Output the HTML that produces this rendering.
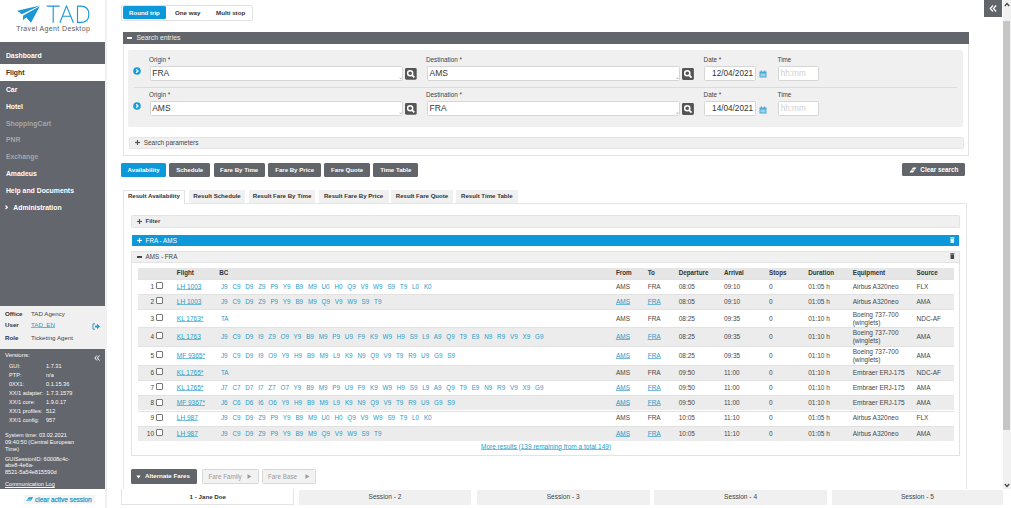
<!DOCTYPE html>
<html><head><meta charset="utf-8">
<style>
*{box-sizing:border-box;margin:0;padding:0}
html,body{width:1011px;height:508px;overflow:hidden;background:#fff}
body{position:relative;font-family:"Liberation Sans",sans-serif;color:#333}
.a{position:absolute}
.t{position:absolute;white-space:nowrap;line-height:1}
.b{font-weight:bold}
.u{text-decoration:underline;text-decoration-thickness:0.6px;text-underline-offset:0.4px}
</style></head>
<body>
<svg class="a" style="left:0;top:0" width="105" height="42" viewBox="0 0 105 42">
<path d="M17.3 10.7 L40 5.5 L21.8 14.3 Z" fill="#1a98d5"/>
<path d="M23.2 15.6 L39.8 6.2 L31 22.8 L26.2 17.6 L22.8 20.2 Z" fill="#1a98d5"/>
<g fill="none" stroke="#1a98d5" stroke-width="1.15" stroke-linejoin="round">
<path d="M46.8 6.1 H59.7 M53.2 6.1 V22.8"/>
<path d="M59.9 22.8 L66.5 5.9 L73.4 22.8 M62.2 16.2 H70.8"/>
<path d="M77.5 22.4 V6.1 H80.5 Q88.9 6.1 88.9 14.2 Q88.9 22.4 80.5 22.4 Z"/>
</g></svg>
<div class="t" style="left:16.3px;top:24.6px;font-size:7px;color:#5c5c5c;letter-spacing:0.36px">Travel Agent Desktop</div>
<div class="a" style="left:105px;top:0;width:1.8px;height:508px;background:#f0f0f0"></div>
<div class="a" style="left:0;top:42px;width:105px;height:264px;background:#63666c"></div>
<div class="a" style="left:0;top:63.5px;width:105px;height:17px;background:#fff"></div>
<div class="t" style="left:5.90px;top:53.10px;font-size:6.85px;font-weight:bold;color:#fff">Dashboard</div>
<div class="t" style="left:5.90px;top:70.15px;font-size:6.85px;font-weight:bold;color:#333">Flight</div>
<div class="t" style="left:5.90px;top:87.15px;font-size:6.85px;font-weight:bold;color:#fff">Car</div>
<div class="t" style="left:5.90px;top:104.05px;font-size:6.85px;font-weight:bold;color:#fff">Hotel</div>
<div class="t" style="left:5.90px;top:120.75px;font-size:6.85px;font-weight:bold;color:#a4a6a9">ShoppingCart</div>
<div class="t" style="left:5.90px;top:137.25px;font-size:6.85px;font-weight:bold;color:#a4a6a9">PNR</div>
<div class="t" style="left:5.90px;top:154.45px;font-size:6.85px;font-weight:bold;color:#a4a6a9">Exchange</div>
<div class="t" style="left:5.90px;top:171.45px;font-size:6.85px;font-weight:bold;color:#fff">Amadeus</div>
<div class="t" style="left:5.90px;top:188.45px;font-size:6.85px;font-weight:bold;color:#fff">Help and Documents</div>
<svg class="a" style="left:5.2px;top:205.4px" width="3" height="4.5" viewBox="0 0 3 4.5"><path d="M0.5 0.5 L2.4 2.25 L0.5 4" fill="none" stroke="#fff" stroke-width="1.1"/></svg>
<div class="t" style="left:13.30px;top:205.05px;font-size:6.85px;font-weight:bold;color:#fff">Administration</div>
<div class="a" style="left:0;top:306px;width:105px;height:42.5px;background:#f0f0f0"></div>
<div class="t" style="left:5.00px;top:311.09px;font-size:6.2px;font-weight:bold;color:#333">Office</div>
<div class="t" style="left:31.00px;top:310.66px;font-size:6.2px;color:#444">TAD Agency</div>
<div class="t" style="left:5.00px;top:322.09px;font-size:6.2px;font-weight:bold;color:#333">User</div>
<div class="t" style="left:31.00px;top:321.66px;font-size:6.2px;color:#2a9cc9;text-decoration:underline;text-decoration-color:rgba(42,156,201,0.65);text-underline-offset:0.3px">TAD_EN</div>
<div class="t" style="left:5.00px;top:335.09px;font-size:6.2px;font-weight:bold;color:#333">Role</div>
<div class="t" style="left:31.00px;top:334.66px;font-size:6.2px;color:#444">Ticketing Agent</div>
<svg class="a" style="left:92px;top:322.5px" width="8" height="7" viewBox="0 0 8 7"><path d="M3 0.8 H1 V6.2 H3" fill="none" stroke="#2a9cc9" stroke-width="1"/><path d="M3 2.5 H5 V0.8 L8 3.5 L5 6.2 V4.5 H3 Z" fill="#2a9cc9"/></svg>
<div class="a" style="left:0;top:348.5px;width:105px;height:140px;background:#63666c"></div>
<div class="t" style="left:5.00px;top:352.04px;font-size:6px;color:#fafafa">Versions:</div>
<svg class="a" style="left:94px;top:355px" width="6" height="6" viewBox="0 0 6 6"><path d="M3 0.5 L0.8 3 L3 5.5 M5.5 0.5 L3.3 3 L5.5 5.5" fill="none" stroke="#fff" stroke-width="1"/></svg>
<div class="t" style="left:9.00px;top:364.44px;font-size:5.6px;color:#fafafa">GUI:</div>
<div class="t" style="left:46.00px;top:364.44px;font-size:5.6px;color:#fafafa">1.7.31</div>
<div class="t" style="left:9.00px;top:373.44px;font-size:5.6px;color:#fafafa">PTP:</div>
<div class="t" style="left:46.00px;top:373.44px;font-size:5.6px;color:#fafafa">n/a</div>
<div class="t" style="left:9.00px;top:382.24px;font-size:5.6px;color:#fafafa">0XX1:</div>
<div class="t" style="left:46.00px;top:382.24px;font-size:5.6px;color:#fafafa">0.1.15.36</div>
<div class="t" style="left:9.00px;top:391.44px;font-size:5.6px;color:#fafafa">XX/1 adapter:</div>
<div class="t" style="left:46.00px;top:391.44px;font-size:5.6px;color:#fafafa">1.7.3.1579</div>
<div class="t" style="left:9.00px;top:400.44px;font-size:5.6px;color:#fafafa">XX/1 core:</div>
<div class="t" style="left:46.00px;top:400.44px;font-size:5.6px;color:#fafafa">1.9.0.17</div>
<div class="t" style="left:9.00px;top:409.14px;font-size:5.6px;color:#fafafa">XX/1 profiles:</div>
<div class="t" style="left:46.00px;top:409.14px;font-size:5.6px;color:#fafafa">512</div>
<div class="t" style="left:9.00px;top:417.94px;font-size:5.6px;color:#fafafa">XX/1 config:</div>
<div class="t" style="left:46.00px;top:417.94px;font-size:5.6px;color:#fafafa">957</div>
<div class="t" style="left:5.00px;top:433.44px;font-size:5.6px;color:#fafafa">System time: 03.02.2021</div>
<div class="t" style="left:5.00px;top:440.24px;font-size:5.6px;color:#fafafa">09:40:50 (Central European</div>
<div class="t" style="left:5.00px;top:447.14px;font-size:5.6px;color:#fafafa">Time)</div>
<div class="t" style="left:5.00px;top:456.94px;font-size:5.6px;color:#fafafa">GUISessionID: 60008c4c-</div>
<div class="t" style="left:5.00px;top:463.44px;font-size:5.6px;color:#fafafa">abe8-4e6a-</div>
<div class="t" style="left:5.00px;top:470.44px;font-size:5.6px;color:#fafafa">8521-5a54e815590d</div>
<div class="t" style="left:5.00px;top:481.94px;font-size:5.6px;color:#fafafa;text-decoration:underline">Communication Log</div>
<div class="a" style="left:24px;top:494.5px;width:71px;height:9.5px;background:#f4f4f4"></div>
<svg class="a" style="left:25.8px;top:496.8px" width="7.5" height="4.2" viewBox="0 0 7.5 4.2"><path d="M0.2 4 L2.8 0.2 H7.2 L4.6 4 Z" fill="#2a9cc9"/><path d="M0.2 4 L1.5 2.1 H5.9 L4.6 4 Z" fill="#7cc3e3"/></svg>
<div class="t" style="left:35.00px;top:497.05px;font-size:6.5px;color:#2a9cc9;-webkit-text-stroke:0.25px #2a9cc9">clear active session</div>
<div class="a" style="left:984px;top:0;width:18px;height:17px;background:#626569"></div>
<svg class="a" style="left:989px;top:5px" width="8" height="7" viewBox="0 0 8 7"><path d="M4 0.5 L1.2 3.5 L4 6.5 M7.2 0.5 L4.4 3.5 L7.2 6.5" fill="none" stroke="#fff" stroke-width="1.2"/></svg>
<div class="a" style="left:1003px;top:0;width:8px;height:489px;background:#f1f1f1"></div>
<div class="a" style="left:1003.2px;top:21.3px;width:6.5px;height:408.7px;background:#c6c6c6"></div>
<svg class="a" style="left:1004px;top:2px" width="6" height="5" viewBox="0 0 6 5"><path d="M0.8 4 L3 1.5 L5.2 4" fill="none" stroke="#444" stroke-width="1.2"/></svg>
<svg class="a" style="left:1004px;top:483px" width="6" height="5" viewBox="0 0 6 5"><path d="M0.8 1 L3 3.5 L5.2 1" fill="none" stroke="#444" stroke-width="1.2"/></svg>
<div class="a" style="left:121px;top:4.7px;width:132px;height:16px;border:1px solid #e2e2e2;border-radius:2px;background:#fff"></div>
<div class="a" style="left:122.7px;top:6.2px;width:43.5px;height:13.1px;background:#0d98da;border-radius:1.5px"></div>
<div class="t" style="left:122.70px;top:9.79px;font-size:6.1px;width:43.50px;text-align:center;font-weight:bold;color:#fff">Round trip</div>
<div class="t" style="left:175.00px;top:9.79px;font-size:6.2px;font-weight:bold;color:#333">One way</div>
<div class="t" style="left:216.00px;top:9.79px;font-size:6.2px;font-weight:bold;color:#333">Multi stop</div>
<div class="a" style="left:122.5px;top:32px;width:846px;height:123.5px;border:1px solid #e3e3e3;border-top:none;background:#fff"></div>
<div class="a" style="left:122.5px;top:32px;width:846px;height:11.8px;background:#626569"></div>
<div class="a" style="left:127.2px;top:37.3px;width:5px;height:1.5px;background:#fff"></div>
<div class="t" style="left:136.50px;top:34.85px;font-size:6.8px;color:#f0f0f0">Search entries</div>
<div class="a" style="left:128.3px;top:50.3px;width:834.7px;height:76.7px;background:#f0f0f0;border-radius:2px"></div>
<div class="a" style="left:134px;top:87px;width:823px;height:1px;background:#dcdcdc"></div>
<svg class="a" style="left:133.3px;top:66.6px" width="8" height="8" viewBox="0 0 8 8"><circle cx="4" cy="4" r="3.8" fill="#1a9ad6"/><path d="M3.2 2.2 L5 4 L3.2 5.8" fill="none" stroke="#fff" stroke-width="1.3"/></svg>
<div class="t" style="left:149.00px;top:57.15px;font-size:6.35px;color:#444">Origin *</div>
<div class="a" style="left:149.5px;top:65.5px;width:253.3px;height:15px;background:#fff;border:1px solid #d6d6d6;border-radius:1.5px"></div>
<div class="t" style="left:152.20px;top:68.88px;font-size:8.5px;color:#333">FRA</div>
<div class="t" style="left:397.5px;top:73.7px;font-size:6px;color:#999">&#8964;</div>
<svg class="a" style="left:404.9px;top:67.8px" width="11.7" height="11.9" viewBox="0 0 12 12"><rect width="12" height="12" rx="1.5" fill="#555"/><circle cx="5.3" cy="5.3" r="2.6" fill="none" stroke="#fff" stroke-width="1.5"/><path d="M7.2 7.2 L9.6 9.6" stroke="#fff" stroke-width="1.8"/></svg>
<div class="t" style="left:426.00px;top:57.15px;font-size:6.35px;color:#444">Destination *</div>
<div class="a" style="left:426.5px;top:65.5px;width:253.4px;height:15px;background:#fff;border:1px solid #d6d6d6;border-radius:1.5px"></div>
<div class="t" style="left:429.60px;top:68.88px;font-size:8.5px;color:#333">AMS</div>
<div class="t" style="left:674.5px;top:73.7px;font-size:6px;color:#999">&#8964;</div>
<svg class="a" style="left:682.3px;top:67.8px" width="11.9" height="11.9" viewBox="0 0 12 12"><rect width="12" height="12" rx="1.5" fill="#555"/><circle cx="5.3" cy="5.3" r="2.6" fill="none" stroke="#fff" stroke-width="1.5"/><path d="M7.2 7.2 L9.6 9.6" stroke="#fff" stroke-width="1.8"/></svg>
<div class="t" style="left:703.60px;top:57.15px;font-size:6.35px;color:#444">Date *</div>
<div class="a" style="left:703.6px;top:65.5px;width:52.5px;height:15px;background:#fff;border:1px solid #d6d6d6;border-radius:1.5px"></div>
<div class="t" style="left:703.60px;top:70.38px;font-size:8.2px;width:49.50px;text-align:right;color:#333">12/04/2021</div>
<svg class="a" style="left:758.8px;top:70.1px" width="8" height="8" viewBox="0 0 8 8"><rect x="0.5" y="1.5" width="7" height="6" fill="#4aa8d8"/><rect x="1.5" y="3.5" width="5" height="3" fill="#9fd0ea"/><rect x="1.8" y="0.3" width="1" height="2" fill="#4aa8d8"/><rect x="5.2" y="0.3" width="1" height="2" fill="#4aa8d8"/></svg>
<div class="t" style="left:777.50px;top:57.15px;font-size:6.35px;color:#444">Time</div>
<div class="a" style="left:777.5px;top:65.5px;width:41.8px;height:15px;background:#fff;border:1px solid #d6d6d6;border-radius:1.5px"></div>
<div class="t" style="left:780.70px;top:70.18px;font-size:8.2px;color:#d0d0d0">hh:mm</div>
<svg class="a" style="left:133.3px;top:102.0px" width="8" height="8" viewBox="0 0 8 8"><circle cx="4" cy="4" r="3.8" fill="#1a9ad6"/><path d="M3.2 2.2 L5 4 L3.2 5.8" fill="none" stroke="#fff" stroke-width="1.3"/></svg>
<div class="t" style="left:149.00px;top:92.45px;font-size:6.35px;color:#444">Origin *</div>
<div class="a" style="left:149.5px;top:100.9px;width:253.3px;height:15px;background:#fff;border:1px solid #d6d6d6;border-radius:1.5px"></div>
<div class="t" style="left:152.20px;top:103.83px;font-size:8.5px;color:#333">AMS</div>
<div class="t" style="left:397.5px;top:109.1px;font-size:6px;color:#999">&#8964;</div>
<svg class="a" style="left:404.9px;top:103.2px" width="11.7" height="11.9" viewBox="0 0 12 12"><rect width="12" height="12" rx="1.5" fill="#555"/><circle cx="5.3" cy="5.3" r="2.6" fill="none" stroke="#fff" stroke-width="1.5"/><path d="M7.2 7.2 L9.6 9.6" stroke="#fff" stroke-width="1.8"/></svg>
<div class="t" style="left:426.00px;top:92.45px;font-size:6.35px;color:#444">Destination *</div>
<div class="a" style="left:426.5px;top:100.9px;width:253.4px;height:15px;background:#fff;border:1px solid #d6d6d6;border-radius:1.5px"></div>
<div class="t" style="left:429.60px;top:103.83px;font-size:8.5px;color:#333">FRA</div>
<div class="t" style="left:674.5px;top:109.1px;font-size:6px;color:#999">&#8964;</div>
<svg class="a" style="left:682.3px;top:103.2px" width="11.9" height="11.9" viewBox="0 0 12 12"><rect width="12" height="12" rx="1.5" fill="#555"/><circle cx="5.3" cy="5.3" r="2.6" fill="none" stroke="#fff" stroke-width="1.5"/><path d="M7.2 7.2 L9.6 9.6" stroke="#fff" stroke-width="1.8"/></svg>
<div class="t" style="left:703.60px;top:92.45px;font-size:6.35px;color:#444">Date *</div>
<div class="a" style="left:703.6px;top:100.9px;width:52.5px;height:15px;background:#fff;border:1px solid #d6d6d6;border-radius:1.5px"></div>
<div class="t" style="left:703.60px;top:105.33px;font-size:8.2px;width:49.50px;text-align:right;color:#333">14/04/2021</div>
<svg class="a" style="left:758.8px;top:105.5px" width="8" height="8" viewBox="0 0 8 8"><rect x="0.5" y="1.5" width="7" height="6" fill="#4aa8d8"/><rect x="1.5" y="3.5" width="5" height="3" fill="#9fd0ea"/><rect x="1.8" y="0.3" width="1" height="2" fill="#4aa8d8"/><rect x="5.2" y="0.3" width="1" height="2" fill="#4aa8d8"/></svg>
<div class="t" style="left:777.50px;top:92.45px;font-size:6.35px;color:#444">Time</div>
<div class="a" style="left:777.5px;top:100.9px;width:41.8px;height:15px;background:#fff;border:1px solid #d6d6d6;border-radius:1.5px"></div>
<div class="t" style="left:780.70px;top:105.13px;font-size:8.2px;color:#d0d0d0">hh:mm</div>
<div class="a" style="left:129px;top:136.8px;width:835px;height:12.4px;background:#f0f0f0;border:1px solid #e6e6e6;border-radius:1.5px"></div>
<svg class="a" style="left:135px;top:140px" width="5" height="5" viewBox="0 0 5 5"><rect x="1.9" y="0" width="1.2" height="5" fill="#555"/><rect x="0" y="1.9" width="5" height="1.2" fill="#555"/></svg>
<div class="t" style="left:143.70px;top:140.35px;font-size:6.45px;color:#444">Search parameters</div>
<div class="a" style="left:121.2px;top:163px;width:44.80px;height:13.90px;background:#0d98da;border-radius:1.5px"></div>
<div class="t" style="left:121.20px;top:166.84px;font-size:6.1px;width:44.80px;text-align:center;font-weight:bold;color:#fff">Availability</div>
<div class="a" style="left:169.2px;top:163px;width:41.00px;height:13.90px;background:#626569;border-radius:1.5px"></div>
<div class="t" style="left:169.20px;top:166.84px;font-size:6.1px;width:41.00px;text-align:center;font-weight:bold;color:#fff">Schedule</div>
<div class="a" style="left:213.6px;top:163px;width:51.20px;height:13.90px;background:#626569;border-radius:1.5px"></div>
<div class="t" style="left:213.60px;top:166.84px;font-size:6.1px;width:51.20px;text-align:center;font-weight:bold;color:#fff">Fare By Time</div>
<div class="a" style="left:268.4px;top:163px;width:52.50px;height:13.90px;background:#626569;border-radius:1.5px"></div>
<div class="t" style="left:268.40px;top:166.84px;font-size:6.1px;width:52.50px;text-align:center;font-weight:bold;color:#fff">Fare By Price</div>
<div class="a" style="left:324.2px;top:163px;width:45.90px;height:13.90px;background:#626569;border-radius:1.5px"></div>
<div class="t" style="left:324.20px;top:166.84px;font-size:6.1px;width:45.90px;text-align:center;font-weight:bold;color:#fff">Fare Quote</div>
<div class="a" style="left:373.2px;top:163px;width:45.20px;height:13.90px;background:#626569;border-radius:1.5px"></div>
<div class="t" style="left:373.20px;top:166.84px;font-size:6.1px;width:45.20px;text-align:center;font-weight:bold;color:#fff">Time Table</div>
<div class="a" style="left:902px;top:163.2px;width:62.80px;height:13.30px;background:#626569;border-radius:1.5px"></div>
<div class="t" style="left:914.00px;top:167.30px;font-size:6.35px;width:50.80px;text-align:center;font-weight:bold;color:#fff">Clear search</div>
<svg class="a" style="left:908.5px;top:167px" width="8" height="6" viewBox="0 0 8 6"><path d="M0.5 5.5 L4 0.5 H7.5 L4 5.5 Z" fill="#fff"/><path d="M2.3 3 H5.8" stroke="#626569" stroke-width="0.8"/></svg>
<div class="a" style="left:122.5px;top:202.5px;width:844px;height:287px;border:1px solid #e6e6e6;background:#fff"></div>
<div class="a" style="left:122.5px;top:189.5px;width:62.8px;height:14px;background:#fff;border:1px solid #e3e3e3;border-bottom:none"></div>
<div class="t" style="left:122.50px;top:193.39px;font-size:6.1px;width:62.80px;text-align:center;font-weight:bold;color:#333">Result Availability</div>
<div class="a" style="left:188.6px;top:190px;width:56.9px;height:12.5px;background:#f0f0f0"></div>
<div class="t" style="left:188.60px;top:193.39px;font-size:6.1px;width:56.90px;text-align:center;font-weight:bold;color:#333">Result Schedule</div>
<div class="a" style="left:248.6px;top:190px;width:66.9px;height:12.5px;background:#f0f0f0"></div>
<div class="t" style="left:248.60px;top:193.39px;font-size:6.1px;width:66.90px;text-align:center;font-weight:bold;color:#333">Result Fare By Time</div>
<div class="a" style="left:318.5px;top:190px;width:70.1px;height:12.5px;background:#f0f0f0"></div>
<div class="t" style="left:318.50px;top:193.39px;font-size:6.1px;width:70.10px;text-align:center;font-weight:bold;color:#333">Result Fare By Price</div>
<div class="a" style="left:391px;top:190px;width:62.0px;height:12.5px;background:#f0f0f0"></div>
<div class="t" style="left:391.00px;top:193.39px;font-size:6.1px;width:62.00px;text-align:center;font-weight:bold;color:#333">Result Fare Quote</div>
<div class="a" style="left:455.7px;top:190px;width:62.3px;height:12.5px;background:#f0f0f0"></div>
<div class="t" style="left:455.70px;top:193.39px;font-size:6.1px;width:62.30px;text-align:center;font-weight:bold;color:#333">Result Time Table</div>
<div class="a" style="left:131.4px;top:215px;width:828.3px;height:12.5px;background:#f0f0f0;border:1px solid #e3e3e3;border-radius:1.5px"></div>
<svg class="a" style="left:137px;top:219px" width="5" height="5" viewBox="0 0 5 5"><rect x="1.9" y="0" width="1.2" height="5" fill="#555"/><rect x="0" y="1.9" width="5" height="1.2" fill="#555"/></svg>
<div class="t" style="left:145.50px;top:218.19px;font-size:6.05px;font-weight:bold;color:#444">Filter</div>
<div class="a" style="left:131.8px;top:235px;width:827.5px;height:11.2px;background:#0d98da"></div>
<svg class="a" style="left:137px;top:238px" width="5" height="5" viewBox="0 0 5 5"><rect x="1.9" y="0" width="1.2" height="5" fill="#fff"/><rect x="0" y="1.9" width="5" height="1.2" fill="#fff"/></svg>
<div class="t" style="left:145.50px;top:238.05px;font-size:6.35px;color:#fff">FRA - AMS</div>
<svg class="a" style="left:950.4px;top:237.3px" width="4.6" height="6" viewBox="0 0 4.6 6"><rect x="0" y="0.4" width="4.6" height="0.9" fill="#dff0fa"/><rect x="1.5" y="0" width="1.6" height="0.6" fill="#dff0fa"/><rect x="0.5" y="1.6" width="3.6" height="4.4" rx="0.4" fill="#dff0fa"/></svg>
<div class="a" style="left:131.4px;top:250.7px;width:828.3px;height:205.5px;border:1px solid #e3e3e3;background:#fff"></div>
<div class="a" style="left:131.4px;top:250.7px;width:828.3px;height:12.2px;background:#f0f0f0;border:1px solid #e3e3e3"></div>
<div class="a" style="left:136.7px;top:256.3px;width:5px;height:1.3px;background:#444"></div>
<div class="t" style="left:145.50px;top:254.25px;font-size:6.3px;color:#444">AMS - FRA</div>
<svg class="a" style="left:950.4px;top:253.3px" width="4.6" height="6" viewBox="0 0 4.6 6"><rect x="0" y="0.4" width="4.6" height="0.9" fill="#444"/><rect x="1.5" y="0" width="1.6" height="0.6" fill="#444"/><rect x="0.5" y="1.6" width="3.6" height="4.4" rx="0.4" fill="#444"/></svg>
<div class="a" style="left:137.8px;top:267.8px;width:816px;height:10.8px;background:#e6e6e6"></div>
<div class="t" style="left:176.80px;top:270.05px;font-size:6.3px;font-weight:bold;color:#333">Flight</div>
<div class="t" style="left:219.30px;top:270.05px;font-size:6.3px;font-weight:bold;color:#333">BC</div>
<div class="t" style="left:615.90px;top:270.05px;font-size:6.3px;font-weight:bold;color:#333">From</div>
<div class="t" style="left:647.70px;top:270.05px;font-size:6.3px;font-weight:bold;color:#333">To</div>
<div class="t" style="left:678.70px;top:270.05px;font-size:6.3px;font-weight:bold;color:#333">Departure</div>
<div class="t" style="left:723.90px;top:270.05px;font-size:6.3px;font-weight:bold;color:#333">Arrival</div>
<div class="t" style="left:769.00px;top:270.05px;font-size:6.3px;font-weight:bold;color:#333">Stops</div>
<div class="t" style="left:808.20px;top:270.05px;font-size:6.3px;font-weight:bold;color:#333">Duration</div>
<div class="t" style="left:852.70px;top:270.05px;font-size:6.3px;font-weight:bold;color:#333">Equipment</div>
<div class="t" style="left:916.50px;top:270.05px;font-size:6.3px;font-weight:bold;color:#333">Source</div>
<div class="a" style="left:137.8px;top:278.6px;width:816px;height:0.6px;background:#e2e2e2"></div>
<div class="t" style="left:130.00px;top:283.75px;font-size:6.5px;width:24.00px;text-align:right;color:#444">1</div>
<div class="a" style="left:156.2px;top:282.0px;width:7px;height:7px;border:0.7px solid #777;border-radius:1px;background:#fff"></div>
<div class="t" style="left:176.80px;top:283.75px;font-size:6.5px;color:#2a9cc9;text-decoration:underline;text-decoration-color:rgba(42,156,201,0.65);text-underline-offset:0.3px">LH 1003</div>
<div class="t" style="left:220.90px;top:283.75px;font-size:6.3px;color:#2a9cc9;word-spacing:3.1px">J9 C9 D9 Z9 P9 Y9 B9 M9 U0 H0 Q9 V9 W9 S9 T9 L0 K0</div>
<div class="t" style="left:615.90px;top:283.75px;font-size:6.5px;color:#484848">AMS</div>
<div class="t" style="left:647.70px;top:283.75px;font-size:6.5px;color:#484848">FRA</div>
<div class="t" style="left:678.70px;top:283.75px;font-size:6.5px;color:#484848">08:05</div>
<div class="t" style="left:723.90px;top:283.75px;font-size:6.5px;color:#484848">09:10</div>
<div class="t" style="left:769.00px;top:283.75px;font-size:6.5px;color:#484848">0</div>
<div class="t" style="left:808.20px;top:283.75px;font-size:6.5px;color:#484848">01:05 h</div>
<div class="t" style="left:916.50px;top:283.75px;font-size:6.5px;color:#484848">FLX</div>
<div class="t" style="left:852.70px;top:283.75px;font-size:6.5px;color:#484848">Airbus A320neo</div>
<div class="a" style="left:137.8px;top:294px;width:816px;height:15.3px;background:#ececec"></div>
<div class="a" style="left:137.8px;top:294px;width:816px;height:0.6px;background:#e2e2e2"></div>
<div class="t" style="left:130.00px;top:299.10px;font-size:6.5px;width:24.00px;text-align:right;color:#444">2</div>
<div class="a" style="left:156.2px;top:297.3px;width:7px;height:7px;border:0.7px solid #777;border-radius:1px;background:#fff"></div>
<div class="t" style="left:176.80px;top:299.10px;font-size:6.5px;color:#2a9cc9;text-decoration:underline;text-decoration-color:rgba(42,156,201,0.65);text-underline-offset:0.3px">LH 1003</div>
<div class="t" style="left:220.90px;top:299.10px;font-size:6.3px;color:#2a9cc9;word-spacing:3.1px">J9 C9 D9 Z9 P9 Y9 B9 M9 Q9 V9 W9 S9 T9</div>
<div class="t" style="left:615.90px;top:299.10px;font-size:6.5px;color:#2a9cc9;text-decoration:underline;text-decoration-color:rgba(42,156,201,0.65);text-underline-offset:0.3px">AMS</div>
<div class="t" style="left:647.70px;top:299.10px;font-size:6.5px;color:#2a9cc9;text-decoration:underline;text-decoration-color:rgba(42,156,201,0.65);text-underline-offset:0.3px">FRA</div>
<div class="t" style="left:678.70px;top:299.10px;font-size:6.5px;color:#484848">08:05</div>
<div class="t" style="left:723.90px;top:299.10px;font-size:6.5px;color:#484848">09:10</div>
<div class="t" style="left:769.00px;top:299.10px;font-size:6.5px;color:#484848">0</div>
<div class="t" style="left:808.20px;top:299.10px;font-size:6.5px;color:#484848">01:05 h</div>
<div class="t" style="left:916.50px;top:299.10px;font-size:6.5px;color:#484848">AMA</div>
<div class="t" style="left:852.70px;top:299.10px;font-size:6.5px;color:#484848">Airbus A320neo</div>
<div class="a" style="left:137.8px;top:309.3px;width:816px;height:0.6px;background:#e2e2e2"></div>
<div class="t" style="left:130.00px;top:315.60px;font-size:6.5px;width:24.00px;text-align:right;color:#444">3</div>
<div class="a" style="left:156.2px;top:313.8px;width:7px;height:7px;border:0.7px solid #777;border-radius:1px;background:#fff"></div>
<div class="t" style="left:176.80px;top:315.60px;font-size:6.5px;color:#2a9cc9;text-decoration:underline;text-decoration-color:rgba(42,156,201,0.65);text-underline-offset:0.3px">KL 1763*</div>
<div class="t" style="left:220.90px;top:315.60px;font-size:6.3px;color:#2a9cc9;word-spacing:3.1px">TA</div>
<div class="t" style="left:615.90px;top:315.60px;font-size:6.5px;color:#484848">AMS</div>
<div class="t" style="left:647.70px;top:315.60px;font-size:6.5px;color:#484848">FRA</div>
<div class="t" style="left:678.70px;top:315.60px;font-size:6.5px;color:#484848">08:25</div>
<div class="t" style="left:723.90px;top:315.60px;font-size:6.5px;color:#484848">09:35</div>
<div class="t" style="left:769.00px;top:315.60px;font-size:6.5px;color:#484848">0</div>
<div class="t" style="left:808.20px;top:315.60px;font-size:6.5px;color:#484848">01:10 h</div>
<div class="t" style="left:916.50px;top:315.60px;font-size:6.5px;color:#484848">NDC-AF</div>
<div class="t" style="left:852.70px;top:311.60px;font-size:6.5px;color:#484848">Boeing 737-700</div>
<div class="t" style="left:852.70px;top:319.60px;font-size:6.5px;color:#484848">(winglets)</div>
<div class="a" style="left:137.8px;top:327px;width:816px;height:19.3px;background:#ececec"></div>
<div class="a" style="left:137.8px;top:327px;width:816px;height:0.6px;background:#e2e2e2"></div>
<div class="t" style="left:130.00px;top:334.10px;font-size:6.5px;width:24.00px;text-align:right;color:#444">4</div>
<div class="a" style="left:156.2px;top:332.3px;width:7px;height:7px;border:0.7px solid #777;border-radius:1px;background:#fff"></div>
<div class="t" style="left:176.80px;top:334.10px;font-size:6.5px;color:#2a9cc9;text-decoration:underline;text-decoration-color:rgba(42,156,201,0.65);text-underline-offset:0.3px">KL 1763</div>
<div class="t" style="left:220.90px;top:334.10px;font-size:6.3px;color:#2a9cc9;word-spacing:3.1px">J9 C9 D9 I9 Z9 O9 Y9 B9 M9 P9 U9 F9 K9 W9 H9 S9 L9 A9 Q9 T9 E9 N9 R9 V9 X9 G9</div>
<div class="t" style="left:615.90px;top:334.10px;font-size:6.5px;color:#2a9cc9;text-decoration:underline;text-decoration-color:rgba(42,156,201,0.65);text-underline-offset:0.3px">AMS</div>
<div class="t" style="left:647.70px;top:334.10px;font-size:6.5px;color:#2a9cc9;text-decoration:underline;text-decoration-color:rgba(42,156,201,0.65);text-underline-offset:0.3px">FRA</div>
<div class="t" style="left:678.70px;top:334.10px;font-size:6.5px;color:#484848">08:25</div>
<div class="t" style="left:723.90px;top:334.10px;font-size:6.5px;color:#484848">09:35</div>
<div class="t" style="left:769.00px;top:334.10px;font-size:6.5px;color:#484848">0</div>
<div class="t" style="left:808.20px;top:334.10px;font-size:6.5px;color:#484848">01:10 h</div>
<div class="t" style="left:916.50px;top:334.10px;font-size:6.5px;color:#484848">AMA</div>
<div class="t" style="left:852.70px;top:330.10px;font-size:6.5px;color:#484848">Boeing 737-700</div>
<div class="t" style="left:852.70px;top:338.10px;font-size:6.5px;color:#484848">(winglets)</div>
<div class="a" style="left:137.8px;top:346.3px;width:816px;height:0.6px;background:#e2e2e2"></div>
<div class="t" style="left:130.00px;top:352.85px;font-size:6.5px;width:24.00px;text-align:right;color:#444">5</div>
<div class="a" style="left:156.2px;top:351.1px;width:7px;height:7px;border:0.7px solid #777;border-radius:1px;background:#fff"></div>
<div class="t" style="left:176.80px;top:352.85px;font-size:6.5px;color:#2a9cc9;text-decoration:underline;text-decoration-color:rgba(42,156,201,0.65);text-underline-offset:0.3px">MF 9365*</div>
<div class="t" style="left:220.90px;top:352.85px;font-size:6.3px;color:#2a9cc9;word-spacing:3.1px">J9 C9 D9 I9 O9 Y9 H9 B9 M9 L9 K9 N9 Q9 V9 T9 R9 U9 G9 S9</div>
<div class="t" style="left:615.90px;top:352.85px;font-size:6.5px;color:#2a9cc9;text-decoration:underline;text-decoration-color:rgba(42,156,201,0.65);text-underline-offset:0.3px">AMS</div>
<div class="t" style="left:647.70px;top:352.85px;font-size:6.5px;color:#2a9cc9;text-decoration:underline;text-decoration-color:rgba(42,156,201,0.65);text-underline-offset:0.3px">FRA</div>
<div class="t" style="left:678.70px;top:352.85px;font-size:6.5px;color:#484848">08:25</div>
<div class="t" style="left:723.90px;top:352.85px;font-size:6.5px;color:#484848">09:35</div>
<div class="t" style="left:769.00px;top:352.85px;font-size:6.5px;color:#484848">0</div>
<div class="t" style="left:808.20px;top:352.85px;font-size:6.5px;color:#484848">01:10 h</div>
<div class="t" style="left:916.50px;top:352.85px;font-size:6.5px;color:#484848">AMA</div>
<div class="t" style="left:852.70px;top:348.85px;font-size:6.5px;color:#484848">Boeing 737-700</div>
<div class="t" style="left:852.70px;top:356.85px;font-size:6.5px;color:#484848">(winglets)</div>
<div class="a" style="left:137.8px;top:364.5px;width:816px;height:15.3px;background:#ececec"></div>
<div class="a" style="left:137.8px;top:364.5px;width:816px;height:0.6px;background:#e2e2e2"></div>
<div class="t" style="left:130.00px;top:369.60px;font-size:6.5px;width:24.00px;text-align:right;color:#444">6</div>
<div class="a" style="left:156.2px;top:367.8px;width:7px;height:7px;border:0.7px solid #777;border-radius:1px;background:#fff"></div>
<div class="t" style="left:176.80px;top:369.60px;font-size:6.5px;color:#2a9cc9;text-decoration:underline;text-decoration-color:rgba(42,156,201,0.65);text-underline-offset:0.3px">KL 1765*</div>
<div class="t" style="left:220.90px;top:369.60px;font-size:6.3px;color:#2a9cc9;word-spacing:3.1px">TA</div>
<div class="t" style="left:615.90px;top:369.60px;font-size:6.5px;color:#484848">AMS</div>
<div class="t" style="left:647.70px;top:369.60px;font-size:6.5px;color:#484848">FRA</div>
<div class="t" style="left:678.70px;top:369.60px;font-size:6.5px;color:#484848">09:50</div>
<div class="t" style="left:723.90px;top:369.60px;font-size:6.5px;color:#484848">11:00</div>
<div class="t" style="left:769.00px;top:369.60px;font-size:6.5px;color:#484848">0</div>
<div class="t" style="left:808.20px;top:369.60px;font-size:6.5px;color:#484848">01:10 h</div>
<div class="t" style="left:916.50px;top:369.60px;font-size:6.5px;color:#484848">NDC-AF</div>
<div class="t" style="left:852.70px;top:369.60px;font-size:6.5px;color:#484848">Embraer ERJ-175</div>
<div class="a" style="left:137.8px;top:379.8px;width:816px;height:0.6px;background:#e2e2e2"></div>
<div class="t" style="left:130.00px;top:385.05px;font-size:6.5px;width:24.00px;text-align:right;color:#444">7</div>
<div class="a" style="left:156.2px;top:383.3px;width:7px;height:7px;border:0.7px solid #777;border-radius:1px;background:#fff"></div>
<div class="t" style="left:176.80px;top:385.05px;font-size:6.5px;color:#2a9cc9;text-decoration:underline;text-decoration-color:rgba(42,156,201,0.65);text-underline-offset:0.3px">KL 1765*</div>
<div class="t" style="left:220.90px;top:385.05px;font-size:6.3px;color:#2a9cc9;word-spacing:3.1px">J7 C7 D7 I7 Z7 O7 Y9 B9 M9 P9 U9 F9 K9 W9 H9 S9 L9 A9 Q9 T9 E9 N9 R9 V9 X9 G9</div>
<div class="t" style="left:615.90px;top:385.05px;font-size:6.5px;color:#2a9cc9;text-decoration:underline;text-decoration-color:rgba(42,156,201,0.65);text-underline-offset:0.3px">AMS</div>
<div class="t" style="left:647.70px;top:385.05px;font-size:6.5px;color:#2a9cc9;text-decoration:underline;text-decoration-color:rgba(42,156,201,0.65);text-underline-offset:0.3px">FRA</div>
<div class="t" style="left:678.70px;top:385.05px;font-size:6.5px;color:#484848">09:50</div>
<div class="t" style="left:723.90px;top:385.05px;font-size:6.5px;color:#484848">11:00</div>
<div class="t" style="left:769.00px;top:385.05px;font-size:6.5px;color:#484848">0</div>
<div class="t" style="left:808.20px;top:385.05px;font-size:6.5px;color:#484848">01:10 h</div>
<div class="t" style="left:916.50px;top:385.05px;font-size:6.5px;color:#484848">AMA</div>
<div class="t" style="left:852.70px;top:385.05px;font-size:6.5px;color:#484848">Embraer ERJ-175</div>
<div class="a" style="left:137.8px;top:395.4px;width:816px;height:15.1px;background:#ececec"></div>
<div class="a" style="left:137.8px;top:395.4px;width:816px;height:0.6px;background:#e2e2e2"></div>
<div class="t" style="left:130.00px;top:400.40px;font-size:6.5px;width:24.00px;text-align:right;color:#444">8</div>
<div class="a" style="left:156.2px;top:398.6px;width:7px;height:7px;border:0.7px solid #777;border-radius:1px;background:#fff"></div>
<div class="t" style="left:176.80px;top:400.40px;font-size:6.5px;color:#2a9cc9;text-decoration:underline;text-decoration-color:rgba(42,156,201,0.65);text-underline-offset:0.3px">MF 9367*</div>
<div class="t" style="left:220.90px;top:400.40px;font-size:6.3px;color:#2a9cc9;word-spacing:3.1px">J6 C6 D6 I6 O6 Y9 H9 B9 M9 L9 K9 N9 Q9 V9 T9 R9 U9 G9 S9</div>
<div class="t" style="left:615.90px;top:400.40px;font-size:6.5px;color:#2a9cc9;text-decoration:underline;text-decoration-color:rgba(42,156,201,0.65);text-underline-offset:0.3px">AMS</div>
<div class="t" style="left:647.70px;top:400.40px;font-size:6.5px;color:#2a9cc9;text-decoration:underline;text-decoration-color:rgba(42,156,201,0.65);text-underline-offset:0.3px">FRA</div>
<div class="t" style="left:678.70px;top:400.40px;font-size:6.5px;color:#484848">09:50</div>
<div class="t" style="left:723.90px;top:400.40px;font-size:6.5px;color:#484848">11:00</div>
<div class="t" style="left:769.00px;top:400.40px;font-size:6.5px;color:#484848">0</div>
<div class="t" style="left:808.20px;top:400.40px;font-size:6.5px;color:#484848">01:10 h</div>
<div class="t" style="left:916.50px;top:400.40px;font-size:6.5px;color:#484848">AMA</div>
<div class="t" style="left:852.70px;top:400.40px;font-size:6.5px;color:#484848">Embraer ERJ-175</div>
<div class="a" style="left:137.8px;top:410.5px;width:816px;height:0.6px;background:#e2e2e2"></div>
<div class="t" style="left:130.00px;top:415.45px;font-size:6.5px;width:24.00px;text-align:right;color:#444">9</div>
<div class="a" style="left:156.2px;top:413.7px;width:7px;height:7px;border:0.7px solid #777;border-radius:1px;background:#fff"></div>
<div class="t" style="left:176.80px;top:415.45px;font-size:6.5px;color:#2a9cc9;text-decoration:underline;text-decoration-color:rgba(42,156,201,0.65);text-underline-offset:0.3px">LH 987</div>
<div class="t" style="left:220.90px;top:415.45px;font-size:6.3px;color:#2a9cc9;word-spacing:3.1px">J9 C9 D9 Z9 P9 Y9 B9 M9 U0 H0 Q9 V9 W9 S9 T9 L0 K0</div>
<div class="t" style="left:615.90px;top:415.45px;font-size:6.5px;color:#484848">AMS</div>
<div class="t" style="left:647.70px;top:415.45px;font-size:6.5px;color:#484848">FRA</div>
<div class="t" style="left:678.70px;top:415.45px;font-size:6.5px;color:#484848">10:05</div>
<div class="t" style="left:723.90px;top:415.45px;font-size:6.5px;color:#484848">11:10</div>
<div class="t" style="left:769.00px;top:415.45px;font-size:6.5px;color:#484848">0</div>
<div class="t" style="left:808.20px;top:415.45px;font-size:6.5px;color:#484848">01:05 h</div>
<div class="t" style="left:916.50px;top:415.45px;font-size:6.5px;color:#484848">FLX</div>
<div class="t" style="left:852.70px;top:415.45px;font-size:6.5px;color:#484848">Airbus A320neo</div>
<div class="a" style="left:137.8px;top:425.5px;width:816px;height:15.3px;background:#ececec"></div>
<div class="a" style="left:137.8px;top:425.5px;width:816px;height:0.6px;background:#e2e2e2"></div>
<div class="t" style="left:130.00px;top:430.60px;font-size:6.5px;width:24.00px;text-align:right;color:#444">10</div>
<div class="a" style="left:156.2px;top:428.8px;width:7px;height:7px;border:0.7px solid #777;border-radius:1px;background:#fff"></div>
<div class="t" style="left:176.80px;top:430.60px;font-size:6.5px;color:#2a9cc9;text-decoration:underline;text-decoration-color:rgba(42,156,201,0.65);text-underline-offset:0.3px">LH 987</div>
<div class="t" style="left:220.90px;top:430.60px;font-size:6.3px;color:#2a9cc9;word-spacing:3.1px">J9 C9 D9 Z9 P9 Y9 B9 M9 Q9 V9 W9 S9 T9</div>
<div class="t" style="left:615.90px;top:430.60px;font-size:6.5px;color:#2a9cc9;text-decoration:underline;text-decoration-color:rgba(42,156,201,0.65);text-underline-offset:0.3px">AMS</div>
<div class="t" style="left:647.70px;top:430.60px;font-size:6.5px;color:#2a9cc9;text-decoration:underline;text-decoration-color:rgba(42,156,201,0.65);text-underline-offset:0.3px">FRA</div>
<div class="t" style="left:678.70px;top:430.60px;font-size:6.5px;color:#484848">10:05</div>
<div class="t" style="left:723.90px;top:430.60px;font-size:6.5px;color:#484848">11:10</div>
<div class="t" style="left:769.00px;top:430.60px;font-size:6.5px;color:#484848">0</div>
<div class="t" style="left:808.20px;top:430.60px;font-size:6.5px;color:#484848">01:05 h</div>
<div class="t" style="left:916.50px;top:430.60px;font-size:6.5px;color:#484848">AMA</div>
<div class="t" style="left:852.70px;top:430.60px;font-size:6.5px;color:#484848">Airbus A320neo</div>
<div class="t" style="left:481.00px;top:443.85px;font-size:6.5px;color:#2a9cc9;text-decoration:underline;text-decoration-color:rgba(42,156,201,0.65);text-underline-offset:0.3px">More results (139 remaining from a total 149)</div>
<div class="a" style="left:130.6px;top:469px;width:66.80px;height:14.50px;background:#626569;border-radius:1.5px"></div>
<div class="t" style="left:137.60px;top:473.14px;font-size:6.2px;width:59.80px;text-align:center;font-weight:bold;color:#fff">Alternate Fares</div>
<svg class="a" style="left:135.5px;top:474.5px" width="5" height="4" viewBox="0 0 5 4"><path d="M0.3 0.5 H4.7 L2.5 3.5 Z" fill="#fff"/></svg>
<div class="a" style="left:201.8px;top:469px;width:57.2px;height:14.5px;background:#f2f2f2;border:1px solid #d8d8d8;border-radius:1.5px"></div>
<div class="t" style="left:208.50px;top:473.65px;font-size:6.3px;color:#9a9a9a">Fare Family</div>
<svg class="a" style="left:247px;top:473.5px" width="5" height="5" viewBox="0 0 5 5"><path d="M0.5 0.3 V4.7 L4.5 2.5 Z" fill="#999"/></svg>
<div class="a" style="left:261.6px;top:469px;width:54.4px;height:14.5px;background:#f2f2f2;border:1px solid #d8d8d8;border-radius:1.5px"></div>
<div class="t" style="left:268.00px;top:473.65px;font-size:6.3px;color:#9a9a9a">Fare Base</div>
<svg class="a" style="left:304.5px;top:473.5px" width="5" height="5" viewBox="0 0 5 5"><path d="M0.5 0.3 V4.7 L4.5 2.5 Z" fill="#999"/></svg>
<div class="a" style="left:107px;top:489px;width:896px;height:19px;background:#fff"></div>
<div class="a" style="left:121.3px;top:488.5px;width:173.0px;height:16.4px;background:#fff;border:1px solid #e3e3e3;border-top:none"></div>
<div class="t" style="left:121.30px;top:494.19px;font-size:6.2px;width:173.00px;text-align:center;font-weight:bold;color:#333">1 - Jane Doe</div>
<div class="a" style="left:298.6px;top:489.8px;width:172.8px;height:15.4px;background:#f0f0f0"></div>
<div class="t" style="left:298.60px;top:494.15px;font-size:6.6px;width:172.80px;text-align:center;color:#444">Session - 2</div>
<div class="a" style="left:476.8px;top:489.8px;width:172.8px;height:15.4px;background:#f0f0f0"></div>
<div class="t" style="left:476.80px;top:494.15px;font-size:6.6px;width:172.80px;text-align:center;color:#444">Session - 3</div>
<div class="a" style="left:654.2px;top:489.8px;width:172.8px;height:15.4px;background:#f0f0f0"></div>
<div class="t" style="left:654.20px;top:494.15px;font-size:6.6px;width:172.80px;text-align:center;color:#444">Session - 4</div>
<div class="a" style="left:832px;top:489.8px;width:170.8px;height:15.4px;background:#f0f0f0"></div>
<div class="t" style="left:832.00px;top:494.15px;font-size:6.6px;width:170.80px;text-align:center;color:#444">Session - 5</div>
</body></html>
